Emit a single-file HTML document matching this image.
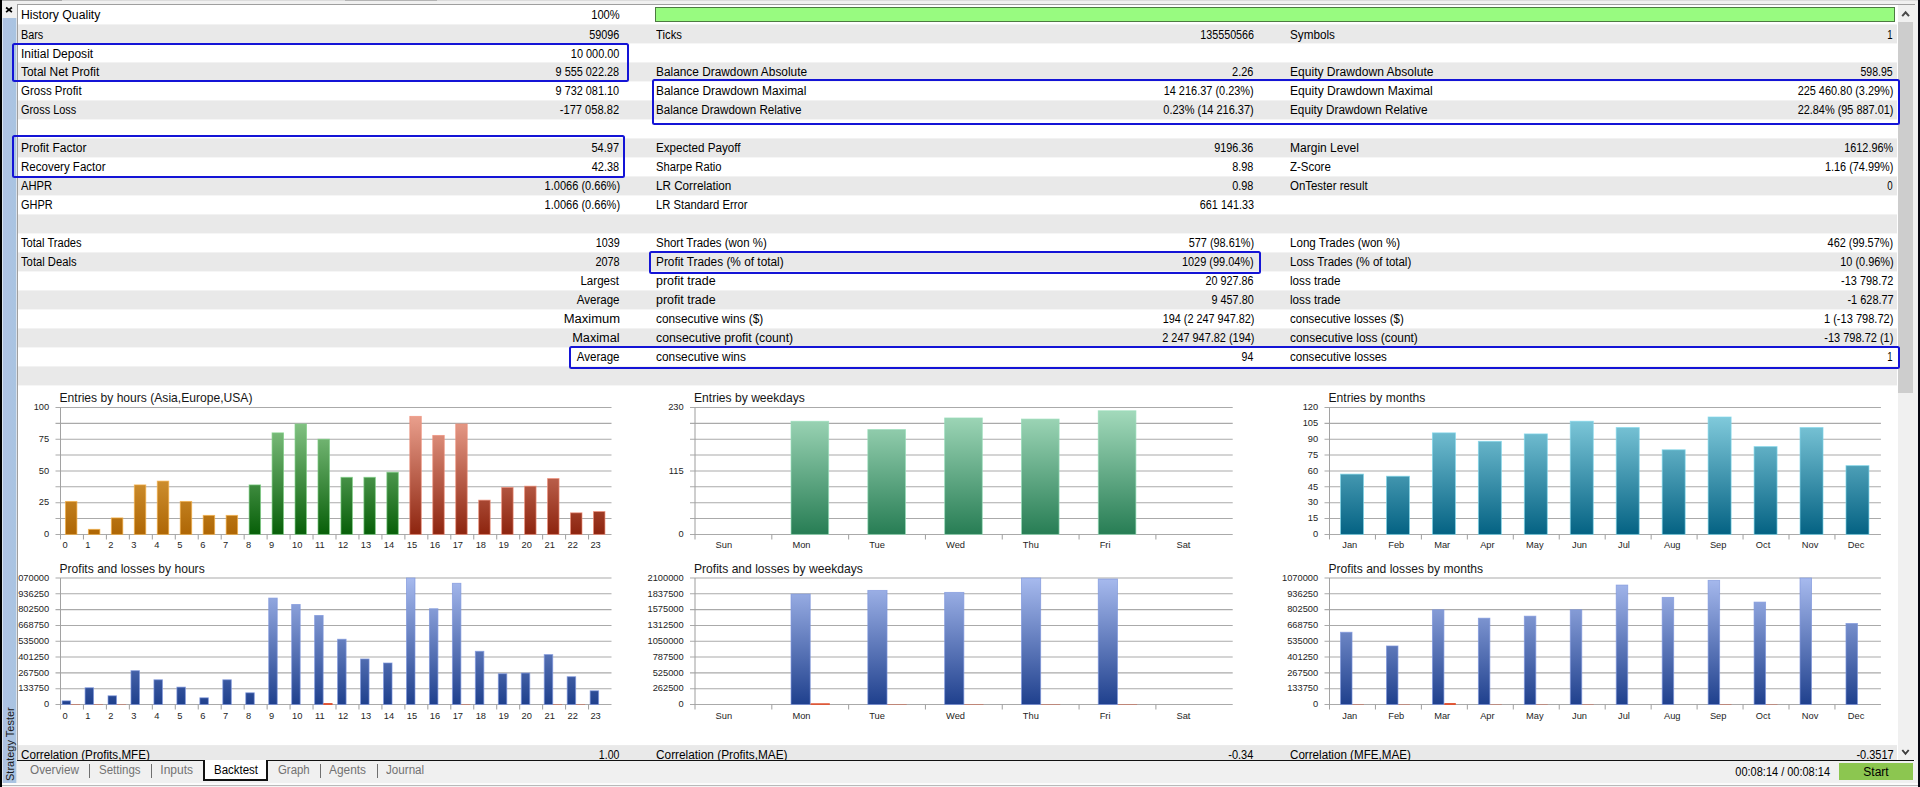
<!DOCTYPE html>
<html><head><meta charset="utf-8"><title>Strategy Tester</title>
<style>
html,body{margin:0;padding:0;background:#f0f0f0;}
body{width:1920px;height:787px;overflow:hidden;position:relative;font-family:"Liberation Sans",sans-serif;font-size:12px;color:#0c0c0c;}
.abs{position:absolute;}
.row{position:absolute;left:18px;width:1879px;height:19px;}
.g{background:#e9e9e9;}
.w{background:#ffffff;}
.l,.v{position:absolute;height:19px;line-height:19px;white-space:pre;font-size:12px;color:#000;}
.v{text-align:right;transform-origin:100% 50%;}
.l{transform-origin:0 50%;}
.box{position:absolute;border:2px solid #1414d6;box-sizing:border-box;border-radius:2.5px;}
.tab{position:absolute;top:761px;height:20px;line-height:19px;font-size:12px;color:#727272;white-space:pre;}
.sep{position:absolute;top:764px;width:1.4px;height:14px;background:#707070;}
svg text{font-family:"Liberation Sans",sans-serif;}
</style></head><body>

<div class="abs" style="left:0;top:0;width:1920px;height:787px;background:#f0f0f0"></div>
<div class="abs" style="left:2px;top:0;width:1916px;height:1px;background:#dcdcdc"></div>
<div class="abs" style="left:2px;top:0;width:60px;height:1px;background:#a9a9a9"></div>
<div class="abs" style="left:345px;top:0;width:92px;height:1px;background:#b4b4b4"></div>
<div class="abs" style="left:0;top:0;width:2px;height:787px;background:#000"></div>
<div class="abs" style="left:1918px;top:0;width:2px;height:787px;background:#05050f"></div>
<div class="abs" style="left:2px;top:18px;width:15px;height:765px;background:linear-gradient(90deg,#dbe5f1 0,#dbe5f1 1px,#aec2e3 1.4px,#a9c4e1 13.6px,#d9e1ec 14px,#d9e1ec 15px)"></div>
<svg class="abs" style="left:5px;top:6px" width="8" height="8" viewBox="0 0 8 8"><path d="M1.1 1.5 L6.9 6.1 M6.9 1.5 L1.1 6.1" stroke="#000" stroke-width="1.75" fill="none"/></svg>
<div class="abs" style="left:3px;top:781px;width:80px;height:15px;line-height:15px;font-size:11px;color:#1a1a1a;transform-origin:0 0;transform:rotate(-90deg);white-space:pre">Strategy Tester</div>
<div class="abs" style="left:17px;top:4px;width:1898px;height:757px;background:#fff;border-left:1px solid #9f9f9f;border-top:1px solid #9f9f9f;box-sizing:border-box"></div>
<svg class="abs" style="left:0;top:0" width="1920" height="762"><rect x="18" y="24.40" width="1879" height="19" fill="#e9e9e9"/><rect x="18" y="62.40" width="1879" height="19" fill="#e9e9e9"/><rect x="18" y="100.40" width="1879" height="19" fill="#e9e9e9"/><rect x="18" y="138.40" width="1879" height="19" fill="#e9e9e9"/><rect x="18" y="176.40" width="1879" height="19" fill="#e9e9e9"/><rect x="18" y="214.40" width="1879" height="19" fill="#e9e9e9"/><rect x="18" y="252.40" width="1879" height="19" fill="#e9e9e9"/><rect x="18" y="290.40" width="1879" height="19" fill="#e9e9e9"/><rect x="18" y="328.40" width="1879" height="19" fill="#e9e9e9"/><rect x="18" y="366.40" width="1879" height="19" fill="#e9e9e9"/><rect x="18" y="745.10" width="1879" height="19" fill="#e9e9e9"/></svg>
<div class="l" style="left:21.20px;top:6px;transform-origin:0 50%;transform:translateY(0px) scaleX(1.0169);">History Quality</div>
<div class="l" style="left:588.67px;top:6px;transform-origin:100% 50%;transform:translateY(0px) scaleX(0.9286);">100%</div>
<div class="l" style="left:21.20px;top:26px;transform-origin:0 50%;transform:translateY(0px) scaleX(0.9013);">Bars</div>
<div class="l" style="left:586.06px;top:26px;transform-origin:100% 50%;transform:translateY(0px) scaleX(0.9043);">59096</div>
<div class="l" style="left:656.20px;top:26px;transform-origin:0 50%;transform:translateY(0px) scaleX(0.9405);">Ticks</div>
<div class="l" style="left:1193.65px;top:26px;transform-origin:100% 50%;transform:translateY(0px) scaleX(0.8961);">135550566</div>
<div class="l" style="left:1289.90px;top:26px;transform-origin:0 50%;transform:translateY(0px) scaleX(0.9756);">Symbols</div>
<div class="l" style="left:1886.49px;top:26px;transform-origin:100% 50%;transform:translateY(0px) scaleX(0.8000);">1</div>
<div class="l" style="left:21.20px;top:45px;transform-origin:0 50%;transform:translateY(0px) scaleX(1.0014);">Initial Deposit</div>
<div class="l" style="left:566.06px;top:45px;transform-origin:100% 50%;transform:translateY(0px) scaleX(0.9096);">10 000.00</div>
<div class="l" style="left:21.20px;top:63px;transform-origin:0 50%;transform:translateY(0px) scaleX(0.9949);">Total Net Profit</div>
<div class="l" style="left:549.36px;top:63px;transform-origin:100% 50%;transform:translateY(0px) scaleX(0.9059);">9 555 022.28</div>
<div class="l" style="left:656.20px;top:63px;transform-origin:0 50%;transform:translateY(0px) scaleX(0.9888);">Balance Drawdown Absolute</div>
<div class="l" style="left:1230.36px;top:63px;transform-origin:100% 50%;transform:translateY(0px) scaleX(0.9103);">2.26</div>
<div class="l" style="left:1289.90px;top:63px;transform-origin:0 50%;transform:translateY(0px) scaleX(1.0050);">Equity Drawdown Absolute</div>
<div class="l" style="left:1856.44px;top:63px;transform-origin:100% 50%;transform:translateY(0px) scaleX(0.8768);">598.95</div>
<div class="l" style="left:21.20px;top:82px;transform-origin:0 50%;transform:translateY(0px) scaleX(0.9569);">Gross Profit</div>
<div class="l" style="left:549.36px;top:82px;transform-origin:100% 50%;transform:translateY(0px) scaleX(0.9059);">9 732 081.10</div>
<div class="l" style="left:656.20px;top:82px;transform-origin:0 50%;transform:translateY(0px) scaleX(0.9933);">Balance Drawdown Maximal</div>
<div class="l" style="left:1155.24px;top:82px;transform-origin:100% 50%;transform:translateY(0px) scaleX(0.9125);">14 216.37 (0.23%)</div>
<div class="l" style="left:1289.90px;top:82px;transform-origin:0 50%;transform:translateY(0px) scaleX(1.0100);">Equity Drawdown Maximal</div>
<div class="l" style="left:1787.94px;top:82px;transform-origin:100% 50%;transform:translateY(0px) scaleX(0.9087);">225 460.80 (3.29%)</div>
<div class="l" style="left:21.20px;top:101px;transform-origin:0 50%;transform:translateY(0px) scaleX(0.9095);">Gross Loss</div>
<div class="l" style="left:555.46px;top:101px;transform-origin:100% 50%;transform:translateY(0px) scaleX(0.9254);">-177 058.82</div>
<div class="l" style="left:656.20px;top:101px;transform-origin:0 50%;transform:translateY(0px) scaleX(0.9690);">Balance Drawdown Relative</div>
<div class="l" style="left:1155.24px;top:101px;transform-origin:100% 50%;transform:translateY(0px) scaleX(0.9159);">0.23% (14 216.37)</div>
<div class="l" style="left:1289.90px;top:101px;transform-origin:0 50%;transform:translateY(0px) scaleX(0.9812);">Equity Drawdown Relative</div>
<div class="l" style="left:1787.94px;top:101px;transform-origin:100% 50%;transform:translateY(0px) scaleX(0.9087);">22.84% (95 887.01)</div>
<div class="l" style="left:21.20px;top:139px;transform-origin:0 50%;transform:translateY(0px) scaleX(1.0016);">Profit Factor</div>
<div class="l" style="left:589.46px;top:139px;transform-origin:100% 50%;transform:translateY(0px) scaleX(0.9172);">54.97</div>
<div class="l" style="left:656.20px;top:139px;transform-origin:0 50%;transform:translateY(0px) scaleX(0.9698);">Expected Payoff</div>
<div class="l" style="left:1210.35px;top:139px;transform-origin:100% 50%;transform:translateY(0px) scaleX(0.9033);">9196.36</div>
<div class="l" style="left:1289.90px;top:139px;transform-origin:0 50%;transform:translateY(0px) scaleX(1.0015);">Margin Level</div>
<div class="l" style="left:1838.97px;top:139px;transform-origin:100% 50%;transform:translateY(0px) scaleX(0.9015);">1612.96%</div>
<div class="l" style="left:21.20px;top:158px;transform-origin:0 50%;transform:translateY(0px) scaleX(0.9597);">Recovery Factor</div>
<div class="l" style="left:589.36px;top:158px;transform-origin:100% 50%;transform:translateY(0px) scaleX(0.9078);">42.38</div>
<div class="l" style="left:656.20px;top:158px;transform-origin:0 50%;transform:translateY(0px) scaleX(0.9349);">Sharpe Ratio</div>
<div class="l" style="left:1230.36px;top:158px;transform-origin:100% 50%;transform:translateY(0px) scaleX(0.9063);">8.98</div>
<div class="l" style="left:1289.90px;top:158px;transform-origin:0 50%;transform:translateY(0px) scaleX(0.9569);">Z-Score</div>
<div class="l" style="left:1817.94px;top:158px;transform-origin:100% 50%;transform:translateY(0px) scaleX(0.9079);">1.16 (74.99%)</div>
<div class="l" style="left:21.20px;top:177px;transform-origin:0 50%;transform:translateY(0px) scaleX(0.9329);">AHPR</div>
<div class="l" style="left:537.55px;top:177px;transform-origin:100% 50%;transform:translateY(0px) scaleX(0.9193);">1.0066 (0.66%)</div>
<div class="l" style="left:656.20px;top:177px;transform-origin:0 50%;transform:translateY(0px) scaleX(0.9735);">LR Correlation</div>
<div class="l" style="left:1230.36px;top:177px;transform-origin:100% 50%;transform:translateY(0px) scaleX(0.9063);">0.98</div>
<div class="l" style="left:1289.90px;top:177px;transform-origin:0 50%;transform:translateY(0px) scaleX(0.9542);">OnTester result</div>
<div class="l" style="left:1886.41px;top:177px;transform-origin:100% 50%;transform:translateY(0px) scaleX(0.8070);">0</div>
<div class="l" style="left:21.20px;top:196px;transform-origin:0 50%;transform:translateY(0px) scaleX(0.9134);">GHPR</div>
<div class="l" style="left:537.55px;top:196px;transform-origin:100% 50%;transform:translateY(0px) scaleX(0.9193);">1.0066 (0.66%)</div>
<div class="l" style="left:656.20px;top:196px;transform-origin:0 50%;transform:translateY(0px) scaleX(0.9387);">LR Standard Error</div>
<div class="l" style="left:1193.66px;top:196px;transform-origin:100% 50%;transform:translateY(0px) scaleX(0.9034);">661 141.33</div>
<div class="l" style="left:21.20px;top:234px;transform-origin:0 50%;transform:translateY(0px) scaleX(0.9274);">Total Trades</div>
<div class="l" style="left:592.84px;top:234px;transform-origin:100% 50%;transform:translateY(0px) scaleX(0.8968);">1039</div>
<div class="l" style="left:656.20px;top:234px;transform-origin:0 50%;transform:translateY(0px) scaleX(0.9539);">Short Trades (won %)</div>
<div class="l" style="left:1181.84px;top:234px;transform-origin:100% 50%;transform:translateY(0px) scaleX(0.9069);">577 (98.61%)</div>
<div class="l" style="left:1289.90px;top:234px;transform-origin:0 50%;transform:translateY(0px) scaleX(0.9662);">Long Trades (won %)</div>
<div class="l" style="left:1821.24px;top:234px;transform-origin:100% 50%;transform:translateY(0px) scaleX(0.9086);">462 (99.57%)</div>
<div class="l" style="left:21.20px;top:253px;transform-origin:0 50%;transform:translateY(0px) scaleX(0.9370);">Total Deals</div>
<div class="l" style="left:592.76px;top:253px;transform-origin:100% 50%;transform:translateY(0px) scaleX(0.9102);">2078</div>
<div class="l" style="left:656.20px;top:253px;transform-origin:0 50%;transform:translateY(0px) scaleX(0.9867);">Profit Trades (% of total)</div>
<div class="l" style="left:1175.24px;top:253px;transform-origin:100% 50%;transform:translateY(0px) scaleX(0.9118);">1029 (99.04%)</div>
<div class="l" style="left:1289.90px;top:253px;transform-origin:0 50%;transform:translateY(0px) scaleX(0.9568);">Loss Trades (% of total)</div>
<div class="l" style="left:1834.64px;top:253px;transform-origin:100% 50%;transform:translateY(0px) scaleX(0.9107);">10 (0.96%)</div>
<div class="l" style="left:579.00px;top:272px;transform-origin:100% 50%;transform:translateY(0px) scaleX(0.9641);">Largest</div>
<div class="l" style="left:656.20px;top:272px;transform-origin:0 50%;transform:translateY(0px) scaleX(1.0392);">profit trade</div>
<div class="l" style="left:1200.35px;top:272px;transform-origin:100% 50%;transform:translateY(0px) scaleX(0.8987);">20 927.86</div>
<div class="l" style="left:1289.90px;top:272px;transform-origin:0 50%;transform:translateY(0px) scaleX(0.9705);">loss trade</div>
<div class="l" style="left:1835.85px;top:272px;transform-origin:100% 50%;transform:translateY(0px) scaleX(0.9112);">-13 798.72</div>
<div class="l" style="left:574.98px;top:291px;transform-origin:100% 50%;transform:translateY(0px) scaleX(0.9614);">Average</div>
<div class="l" style="left:656.20px;top:291px;transform-origin:0 50%;transform:translateY(0px) scaleX(1.0392);">profit trade</div>
<div class="l" style="left:1207.05px;top:291px;transform-origin:100% 50%;transform:translateY(0px) scaleX(0.9037);">9 457.80</div>
<div class="l" style="left:1289.90px;top:291px;transform-origin:0 50%;transform:translateY(0px) scaleX(0.9705);">loss trade</div>
<div class="l" style="left:1842.55px;top:291px;transform-origin:100% 50%;transform:translateY(0px) scaleX(0.9133);">-1 628.77</div>
<div class="l" style="left:567.87px;top:310px;transform-origin:100% 50%;transform:translateY(0px) scaleX(1.0817);">Maximum</div>
<div class="l" style="left:656.20px;top:310px;transform-origin:0 50%;transform:translateY(0px) scaleX(0.9860);">consecutive wins ($)</div>
<div class="l" style="left:1152.53px;top:310px;transform-origin:100% 50%;transform:translateY(0px) scaleX(0.9048);">194 (2 247 947.82)</div>
<div class="l" style="left:1289.90px;top:310px;transform-origin:0 50%;transform:translateY(0px) scaleX(0.9583);">consecutive losses ($)</div>
<div class="l" style="left:1817.95px;top:310px;transform-origin:100% 50%;transform:translateY(0px) scaleX(0.9214);">1 (-13 798.72)</div>
<div class="l" style="left:575.15px;top:329px;transform-origin:100% 50%;transform:translateY(0px) scaleX(1.0629);">Maximal</div>
<div class="l" style="left:656.20px;top:329px;transform-origin:0 50%;transform:translateY(0px) scaleX(1.0233);">consecutive profit (count)</div>
<div class="l" style="left:1152.54px;top:329px;transform-origin:100% 50%;transform:translateY(0px) scaleX(0.9091);">2 247 947.82 (194)</div>
<div class="l" style="left:1289.90px;top:329px;transform-origin:0 50%;transform:translateY(0px) scaleX(0.9929);">consecutive loss (count)</div>
<div class="l" style="left:1817.94px;top:329px;transform-origin:100% 50%;transform:translateY(0px) scaleX(0.9164);">-13 798.72 (1)</div>
<div class="l" style="left:574.98px;top:348px;transform-origin:100% 50%;transform:translateY(0px) scaleX(0.9614);">Average</div>
<div class="l" style="left:656.20px;top:348px;transform-origin:0 50%;transform:translateY(0px) scaleX(0.9911);">consecutive wins</div>
<div class="l" style="left:1240.26px;top:348px;transform-origin:100% 50%;transform:translateY(0px) scaleX(0.8800);">94</div>
<div class="l" style="left:1289.90px;top:348px;transform-origin:0 50%;transform:translateY(0px) scaleX(0.9619);">consecutive losses</div>
<div class="l" style="left:1886.49px;top:348px;transform-origin:100% 50%;transform:translateY(0px) scaleX(0.8000);">1</div>
<div class="l" style="left:21.20px;top:746px;transform-origin:0 50%;transform:translateY(0px) scaleX(0.9711);">Correlation (Profits,MFE)</div>
<div class="l" style="left:596.04px;top:746px;transform-origin:100% 50%;transform:translateY(0px) scaleX(0.8773);">1.00</div>
<div class="l" style="left:656.20px;top:746px;transform-origin:0 50%;transform:translateY(0px) scaleX(0.9864);">Correlation (Profits,MAE)</div>
<div class="l" style="left:1226.27px;top:746px;transform-origin:100% 50%;transform:translateY(0px) scaleX(0.9170);">-0.34</div>
<div class="l" style="left:1289.90px;top:746px;transform-origin:0 50%;transform:translateY(0px) scaleX(0.9692);">Correlation (MFE,MAE)</div>
<div class="l" style="left:1852.55px;top:746px;transform-origin:100% 50%;transform:translateY(0px) scaleX(0.9167);">-0.3517</div>
<div class="abs" style="left:655px;top:7px;width:1240px;height:15px;box-sizing:border-box;background:#98fb80;border:1px solid #4d7a42"></div>
<svg class="abs" style="left:18px;top:385px" width="1879" height="361" viewBox="18 385 1879 361">
<defs>
<linearGradient id="or0" gradientUnits="userSpaceOnUse" x1="0" y1="407.5" x2="0" y2="534.4"><stop offset="0" stop-color="#f6c468"/><stop offset="1" stop-color="#ae6604"/></linearGradient>
<linearGradient id="gr0" gradientUnits="userSpaceOnUse" x1="0" y1="407.5" x2="0" y2="534.4"><stop offset="0" stop-color="#93cf93"/><stop offset="1" stop-color="#075f08"/></linearGradient>
<linearGradient id="rd0" gradientUnits="userSpaceOnUse" x1="0" y1="407.5" x2="0" y2="534.4"><stop offset="0" stop-color="#f0a896"/><stop offset="1" stop-color="#8d240e"/></linearGradient>
<linearGradient id="wk0" gradientUnits="userSpaceOnUse" x1="0" y1="407.5" x2="0" y2="534.4"><stop offset="0" stop-color="#a6dcbe"/><stop offset="1" stop-color="#277d54"/></linearGradient>
<linearGradient id="mo0" gradientUnits="userSpaceOnUse" x1="0" y1="407.5" x2="0" y2="534.4"><stop offset="0" stop-color="#8ad2e2"/><stop offset="1" stop-color="#046283"/></linearGradient>
<linearGradient id="bl0" gradientUnits="userSpaceOnUse" x1="0" y1="407.5" x2="0" y2="534.4"><stop offset="0" stop-color="#a7baee"/><stop offset="1" stop-color="#1f408d"/></linearGradient>
<linearGradient id="or1" gradientUnits="userSpaceOnUse" x1="0" y1="578.0" x2="0" y2="704.5"><stop offset="0" stop-color="#f6c468"/><stop offset="1" stop-color="#ae6604"/></linearGradient>
<linearGradient id="gr1" gradientUnits="userSpaceOnUse" x1="0" y1="578.0" x2="0" y2="704.5"><stop offset="0" stop-color="#93cf93"/><stop offset="1" stop-color="#075f08"/></linearGradient>
<linearGradient id="rd1" gradientUnits="userSpaceOnUse" x1="0" y1="578.0" x2="0" y2="704.5"><stop offset="0" stop-color="#f0a896"/><stop offset="1" stop-color="#8d240e"/></linearGradient>
<linearGradient id="wk1" gradientUnits="userSpaceOnUse" x1="0" y1="578.0" x2="0" y2="704.5"><stop offset="0" stop-color="#a6dcbe"/><stop offset="1" stop-color="#277d54"/></linearGradient>
<linearGradient id="mo1" gradientUnits="userSpaceOnUse" x1="0" y1="578.0" x2="0" y2="704.5"><stop offset="0" stop-color="#8ad2e2"/><stop offset="1" stop-color="#046283"/></linearGradient>
<linearGradient id="bl1" gradientUnits="userSpaceOnUse" x1="0" y1="578.0" x2="0" y2="704.5"><stop offset="0" stop-color="#a7baee"/><stop offset="1" stop-color="#1f408d"/></linearGradient>
</defs>
<line x1="55.5" y1="407.5" x2="611.5" y2="407.5" stroke="#aaaaaa" stroke-width="1.05"/>
<line x1="55.5" y1="423.36" x2="611.5" y2="423.36" stroke="#aaaaaa" stroke-width="1.05"/>
<line x1="55.5" y1="439.23" x2="611.5" y2="439.23" stroke="#aaaaaa" stroke-width="1.05"/>
<line x1="55.5" y1="455.09" x2="611.5" y2="455.09" stroke="#aaaaaa" stroke-width="1.05"/>
<line x1="55.5" y1="470.95" x2="611.5" y2="470.95" stroke="#aaaaaa" stroke-width="1.05"/>
<line x1="55.5" y1="486.81" x2="611.5" y2="486.81" stroke="#aaaaaa" stroke-width="1.05"/>
<line x1="55.5" y1="502.67" x2="611.5" y2="502.67" stroke="#aaaaaa" stroke-width="1.05"/>
<line x1="55.5" y1="518.54" x2="611.5" y2="518.54" stroke="#aaaaaa" stroke-width="1.05"/>
<line x1="55.5" y1="534.4" x2="611.5" y2="534.4" stroke="#aaaaaa" stroke-width="1.05"/>
<line x1="60.5" y1="407.5" x2="60.5" y2="539.4" stroke="#a2a2a2" stroke-width="1.05"/>
<line x1="83.46" y1="534.4" x2="83.46" y2="539.4" stroke="#a2a2a2" stroke-width="1.05"/>
<line x1="106.42" y1="534.4" x2="106.42" y2="539.4" stroke="#a2a2a2" stroke-width="1.05"/>
<line x1="129.38" y1="534.4" x2="129.38" y2="539.4" stroke="#a2a2a2" stroke-width="1.05"/>
<line x1="152.33" y1="534.4" x2="152.33" y2="539.4" stroke="#a2a2a2" stroke-width="1.05"/>
<line x1="175.29" y1="534.4" x2="175.29" y2="539.4" stroke="#a2a2a2" stroke-width="1.05"/>
<line x1="198.25" y1="534.4" x2="198.25" y2="539.4" stroke="#a2a2a2" stroke-width="1.05"/>
<line x1="221.21" y1="534.4" x2="221.21" y2="539.4" stroke="#a2a2a2" stroke-width="1.05"/>
<line x1="244.17" y1="534.4" x2="244.17" y2="539.4" stroke="#a2a2a2" stroke-width="1.05"/>
<line x1="267.12" y1="534.4" x2="267.12" y2="539.4" stroke="#a2a2a2" stroke-width="1.05"/>
<line x1="290.08" y1="534.4" x2="290.08" y2="539.4" stroke="#a2a2a2" stroke-width="1.05"/>
<line x1="313.04" y1="534.4" x2="313.04" y2="539.4" stroke="#a2a2a2" stroke-width="1.05"/>
<line x1="336" y1="534.4" x2="336" y2="539.4" stroke="#a2a2a2" stroke-width="1.05"/>
<line x1="358.96" y1="534.4" x2="358.96" y2="539.4" stroke="#a2a2a2" stroke-width="1.05"/>
<line x1="381.92" y1="534.4" x2="381.92" y2="539.4" stroke="#a2a2a2" stroke-width="1.05"/>
<line x1="404.88" y1="534.4" x2="404.88" y2="539.4" stroke="#a2a2a2" stroke-width="1.05"/>
<line x1="427.83" y1="534.4" x2="427.83" y2="539.4" stroke="#a2a2a2" stroke-width="1.05"/>
<line x1="450.79" y1="534.4" x2="450.79" y2="539.4" stroke="#a2a2a2" stroke-width="1.05"/>
<line x1="473.75" y1="534.4" x2="473.75" y2="539.4" stroke="#a2a2a2" stroke-width="1.05"/>
<line x1="496.71" y1="534.4" x2="496.71" y2="539.4" stroke="#a2a2a2" stroke-width="1.05"/>
<line x1="519.67" y1="534.4" x2="519.67" y2="539.4" stroke="#a2a2a2" stroke-width="1.05"/>
<line x1="542.62" y1="534.4" x2="542.62" y2="539.4" stroke="#a2a2a2" stroke-width="1.05"/>
<line x1="565.58" y1="534.4" x2="565.58" y2="539.4" stroke="#a2a2a2" stroke-width="1.05"/>
<line x1="588.54" y1="534.4" x2="588.54" y2="539.4" stroke="#a2a2a2" stroke-width="1.05"/>
<text x="59.5" y="401.7" font-size="12.1" fill="#161616">Entries by hours (Asia,Europe,USA)</text>
<text x="49.2" y="410.3" font-size="9.3" text-anchor="end" fill="#1e1e1e">100</text>
<text x="49.2" y="442.03" font-size="9.3" text-anchor="end" fill="#1e1e1e">75</text>
<text x="49.2" y="473.75" font-size="9.3" text-anchor="end" fill="#1e1e1e">50</text>
<text x="49.2" y="505.47" font-size="9.3" text-anchor="end" fill="#1e1e1e">25</text>
<text x="49.2" y="537.2" font-size="9.3" text-anchor="end" fill="#1e1e1e">0</text>
<text x="62.4" y="548.2" font-size="9.3" fill="#1e1e1e">0</text>
<text x="85.36" y="548.2" font-size="9.3" fill="#1e1e1e">1</text>
<text x="108.32" y="548.2" font-size="9.3" fill="#1e1e1e">2</text>
<text x="131.28" y="548.2" font-size="9.3" fill="#1e1e1e">3</text>
<text x="154.23" y="548.2" font-size="9.3" fill="#1e1e1e">4</text>
<text x="177.19" y="548.2" font-size="9.3" fill="#1e1e1e">5</text>
<text x="200.15" y="548.2" font-size="9.3" fill="#1e1e1e">6</text>
<text x="223.11" y="548.2" font-size="9.3" fill="#1e1e1e">7</text>
<text x="246.07" y="548.2" font-size="9.3" fill="#1e1e1e">8</text>
<text x="269.02" y="548.2" font-size="9.3" fill="#1e1e1e">9</text>
<text x="291.98" y="548.2" font-size="9.3" fill="#1e1e1e">10</text>
<text x="314.94" y="548.2" font-size="9.3" fill="#1e1e1e">11</text>
<text x="337.9" y="548.2" font-size="9.3" fill="#1e1e1e">12</text>
<text x="360.86" y="548.2" font-size="9.3" fill="#1e1e1e">13</text>
<text x="383.82" y="548.2" font-size="9.3" fill="#1e1e1e">14</text>
<text x="406.77" y="548.2" font-size="9.3" fill="#1e1e1e">15</text>
<text x="429.73" y="548.2" font-size="9.3" fill="#1e1e1e">16</text>
<text x="452.69" y="548.2" font-size="9.3" fill="#1e1e1e">17</text>
<text x="475.65" y="548.2" font-size="9.3" fill="#1e1e1e">18</text>
<text x="498.61" y="548.2" font-size="9.3" fill="#1e1e1e">19</text>
<text x="521.57" y="548.2" font-size="9.3" fill="#1e1e1e">20</text>
<text x="544.52" y="548.2" font-size="9.3" fill="#1e1e1e">21</text>
<text x="567.48" y="548.2" font-size="9.3" fill="#1e1e1e">22</text>
<text x="590.44" y="548.2" font-size="9.3" fill="#1e1e1e">23</text>
<rect x="65.44" y="501.41" width="11.48" height="32.99" fill="url(#or0)" stroke="#f4b048" stroke-width="0.9" stroke-opacity="0.75"/>
<rect x="88.39" y="529.32" width="11.48" height="5.08" fill="url(#or0)" stroke="#f4b048" stroke-width="0.9" stroke-opacity="0.75"/>
<rect x="111.35" y="517.9" width="11.48" height="16.5" fill="url(#or0)" stroke="#f4b048" stroke-width="0.9" stroke-opacity="0.75"/>
<rect x="134.31" y="484.91" width="11.48" height="49.49" fill="url(#or0)" stroke="#f4b048" stroke-width="0.9" stroke-opacity="0.75"/>
<rect x="157.27" y="481.1" width="11.48" height="53.3" fill="url(#or0)" stroke="#f4b048" stroke-width="0.9" stroke-opacity="0.75"/>
<rect x="180.23" y="501.41" width="11.48" height="32.99" fill="url(#or0)" stroke="#f4b048" stroke-width="0.9" stroke-opacity="0.75"/>
<rect x="203.19" y="515.37" width="11.48" height="19.03" fill="url(#or0)" stroke="#f4b048" stroke-width="0.9" stroke-opacity="0.75"/>
<rect x="226.14" y="515.37" width="11.48" height="19.03" fill="url(#or0)" stroke="#f4b048" stroke-width="0.9" stroke-opacity="0.75"/>
<rect x="249.1" y="484.91" width="11.48" height="49.49" fill="url(#gr0)" stroke="#7fcf86" stroke-width="0.9" stroke-opacity="0.75"/>
<rect x="272.06" y="432.88" width="11.48" height="101.52" fill="url(#gr0)" stroke="#7fcf86" stroke-width="0.9" stroke-opacity="0.75"/>
<rect x="295.02" y="424" width="11.48" height="110.4" fill="url(#gr0)" stroke="#7fcf86" stroke-width="0.9" stroke-opacity="0.75"/>
<rect x="317.98" y="439.23" width="11.48" height="95.17" fill="url(#gr0)" stroke="#7fcf86" stroke-width="0.9" stroke-opacity="0.75"/>
<rect x="340.94" y="477.29" width="11.48" height="57.11" fill="url(#gr0)" stroke="#7fcf86" stroke-width="0.9" stroke-opacity="0.75"/>
<rect x="363.89" y="477.29" width="11.48" height="57.11" fill="url(#gr0)" stroke="#7fcf86" stroke-width="0.9" stroke-opacity="0.75"/>
<rect x="386.85" y="472.22" width="11.48" height="62.18" fill="url(#gr0)" stroke="#7fcf86" stroke-width="0.9" stroke-opacity="0.75"/>
<rect x="409.81" y="416.38" width="11.48" height="118.02" fill="url(#rd0)" stroke="#ee8d78" stroke-width="0.9" stroke-opacity="0.75"/>
<rect x="432.77" y="435.42" width="11.48" height="98.98" fill="url(#rd0)" stroke="#ee8d78" stroke-width="0.9" stroke-opacity="0.75"/>
<rect x="455.73" y="424" width="11.48" height="110.4" fill="url(#rd0)" stroke="#ee8d78" stroke-width="0.9" stroke-opacity="0.75"/>
<rect x="478.69" y="500.14" width="11.48" height="34.26" fill="url(#rd0)" stroke="#ee8d78" stroke-width="0.9" stroke-opacity="0.75"/>
<rect x="501.64" y="487.45" width="11.48" height="46.95" fill="url(#rd0)" stroke="#ee8d78" stroke-width="0.9" stroke-opacity="0.75"/>
<rect x="524.6" y="486.18" width="11.48" height="48.22" fill="url(#rd0)" stroke="#ee8d78" stroke-width="0.9" stroke-opacity="0.75"/>
<rect x="547.56" y="478.56" width="11.48" height="55.84" fill="url(#rd0)" stroke="#ee8d78" stroke-width="0.9" stroke-opacity="0.75"/>
<rect x="570.52" y="512.83" width="11.48" height="21.57" fill="url(#rd0)" stroke="#ee8d78" stroke-width="0.9" stroke-opacity="0.75"/>
<rect x="593.48" y="511.56" width="11.48" height="22.84" fill="url(#rd0)" stroke="#ee8d78" stroke-width="0.9" stroke-opacity="0.75"/>
<line x1="690" y1="407.5" x2="1232.7" y2="407.5" stroke="#aaaaaa" stroke-width="1.05"/>
<line x1="690" y1="423.36" x2="1232.7" y2="423.36" stroke="#aaaaaa" stroke-width="1.05"/>
<line x1="690" y1="439.23" x2="1232.7" y2="439.23" stroke="#aaaaaa" stroke-width="1.05"/>
<line x1="690" y1="455.09" x2="1232.7" y2="455.09" stroke="#aaaaaa" stroke-width="1.05"/>
<line x1="690" y1="470.95" x2="1232.7" y2="470.95" stroke="#aaaaaa" stroke-width="1.05"/>
<line x1="690" y1="486.81" x2="1232.7" y2="486.81" stroke="#aaaaaa" stroke-width="1.05"/>
<line x1="690" y1="502.67" x2="1232.7" y2="502.67" stroke="#aaaaaa" stroke-width="1.05"/>
<line x1="690" y1="518.54" x2="1232.7" y2="518.54" stroke="#aaaaaa" stroke-width="1.05"/>
<line x1="690" y1="534.4" x2="1232.7" y2="534.4" stroke="#aaaaaa" stroke-width="1.05"/>
<line x1="695" y1="407.5" x2="695" y2="539.4" stroke="#a2a2a2" stroke-width="1.05"/>
<line x1="771.81" y1="534.4" x2="771.81" y2="539.4" stroke="#a2a2a2" stroke-width="1.05"/>
<line x1="848.63" y1="534.4" x2="848.63" y2="539.4" stroke="#a2a2a2" stroke-width="1.05"/>
<line x1="925.44" y1="534.4" x2="925.44" y2="539.4" stroke="#a2a2a2" stroke-width="1.05"/>
<line x1="1002.26" y1="534.4" x2="1002.26" y2="539.4" stroke="#a2a2a2" stroke-width="1.05"/>
<line x1="1079.07" y1="534.4" x2="1079.07" y2="539.4" stroke="#a2a2a2" stroke-width="1.05"/>
<line x1="1155.89" y1="534.4" x2="1155.89" y2="539.4" stroke="#a2a2a2" stroke-width="1.05"/>
<text x="694" y="401.7" font-size="12.1" fill="#161616">Entries by weekdays</text>
<text x="683.7" y="410.3" font-size="9.3" text-anchor="end" fill="#1e1e1e">230</text>
<text x="683.7" y="473.75" font-size="9.3" text-anchor="end" fill="#1e1e1e">115</text>
<text x="683.7" y="537.2" font-size="9.3" text-anchor="end" fill="#1e1e1e">0</text>
<text x="715.6" y="548.2" font-size="9.3" fill="#1e1e1e">Sun</text>
<text x="792.41" y="548.2" font-size="9.3" fill="#1e1e1e">Mon</text>
<text x="869.23" y="548.2" font-size="9.3" fill="#1e1e1e">Tue</text>
<text x="946.04" y="548.2" font-size="9.3" fill="#1e1e1e">Wed</text>
<text x="1022.86" y="548.2" font-size="9.3" fill="#1e1e1e">Thu</text>
<text x="1099.67" y="548.2" font-size="9.3" fill="#1e1e1e">Fri</text>
<text x="1176.49" y="548.2" font-size="9.3" fill="#1e1e1e">Sat</text>
<rect x="791.02" y="421.29" width="37.64" height="113.11" fill="url(#wk0)" stroke="#97dcb8" stroke-width="0.9" stroke-opacity="0.75"/>
<rect x="867.83" y="429.57" width="37.64" height="104.83" fill="url(#wk0)" stroke="#97dcb8" stroke-width="0.9" stroke-opacity="0.75"/>
<rect x="944.65" y="417.98" width="37.64" height="116.42" fill="url(#wk0)" stroke="#97dcb8" stroke-width="0.9" stroke-opacity="0.75"/>
<rect x="1021.46" y="419.09" width="37.64" height="115.31" fill="url(#wk0)" stroke="#97dcb8" stroke-width="0.9" stroke-opacity="0.75"/>
<rect x="1098.27" y="410.81" width="37.64" height="123.59" fill="url(#wk0)" stroke="#97dcb8" stroke-width="0.9" stroke-opacity="0.75"/>
<line x1="1324.5" y1="407.5" x2="1880.9" y2="407.5" stroke="#aaaaaa" stroke-width="1.05"/>
<line x1="1324.5" y1="423.36" x2="1880.9" y2="423.36" stroke="#aaaaaa" stroke-width="1.05"/>
<line x1="1324.5" y1="439.23" x2="1880.9" y2="439.23" stroke="#aaaaaa" stroke-width="1.05"/>
<line x1="1324.5" y1="455.09" x2="1880.9" y2="455.09" stroke="#aaaaaa" stroke-width="1.05"/>
<line x1="1324.5" y1="470.95" x2="1880.9" y2="470.95" stroke="#aaaaaa" stroke-width="1.05"/>
<line x1="1324.5" y1="486.81" x2="1880.9" y2="486.81" stroke="#aaaaaa" stroke-width="1.05"/>
<line x1="1324.5" y1="502.67" x2="1880.9" y2="502.67" stroke="#aaaaaa" stroke-width="1.05"/>
<line x1="1324.5" y1="518.54" x2="1880.9" y2="518.54" stroke="#aaaaaa" stroke-width="1.05"/>
<line x1="1324.5" y1="534.4" x2="1880.9" y2="534.4" stroke="#aaaaaa" stroke-width="1.05"/>
<line x1="1329.5" y1="407.5" x2="1329.5" y2="539.4" stroke="#a2a2a2" stroke-width="1.05"/>
<line x1="1375.45" y1="534.4" x2="1375.45" y2="539.4" stroke="#a2a2a2" stroke-width="1.05"/>
<line x1="1421.4" y1="534.4" x2="1421.4" y2="539.4" stroke="#a2a2a2" stroke-width="1.05"/>
<line x1="1467.35" y1="534.4" x2="1467.35" y2="539.4" stroke="#a2a2a2" stroke-width="1.05"/>
<line x1="1513.3" y1="534.4" x2="1513.3" y2="539.4" stroke="#a2a2a2" stroke-width="1.05"/>
<line x1="1559.25" y1="534.4" x2="1559.25" y2="539.4" stroke="#a2a2a2" stroke-width="1.05"/>
<line x1="1605.2" y1="534.4" x2="1605.2" y2="539.4" stroke="#a2a2a2" stroke-width="1.05"/>
<line x1="1651.15" y1="534.4" x2="1651.15" y2="539.4" stroke="#a2a2a2" stroke-width="1.05"/>
<line x1="1697.1" y1="534.4" x2="1697.1" y2="539.4" stroke="#a2a2a2" stroke-width="1.05"/>
<line x1="1743.05" y1="534.4" x2="1743.05" y2="539.4" stroke="#a2a2a2" stroke-width="1.05"/>
<line x1="1789" y1="534.4" x2="1789" y2="539.4" stroke="#a2a2a2" stroke-width="1.05"/>
<line x1="1834.95" y1="534.4" x2="1834.95" y2="539.4" stroke="#a2a2a2" stroke-width="1.05"/>
<text x="1328.5" y="401.7" font-size="12.1" fill="#161616">Entries by months</text>
<text x="1318.2" y="410.3" font-size="9.3" text-anchor="end" fill="#1e1e1e">120</text>
<text x="1318.2" y="426.16" font-size="9.3" text-anchor="end" fill="#1e1e1e">105</text>
<text x="1318.2" y="442.03" font-size="9.3" text-anchor="end" fill="#1e1e1e">90</text>
<text x="1318.2" y="457.89" font-size="9.3" text-anchor="end" fill="#1e1e1e">75</text>
<text x="1318.2" y="473.75" font-size="9.3" text-anchor="end" fill="#1e1e1e">60</text>
<text x="1318.2" y="489.61" font-size="9.3" text-anchor="end" fill="#1e1e1e">45</text>
<text x="1318.2" y="505.47" font-size="9.3" text-anchor="end" fill="#1e1e1e">30</text>
<text x="1318.2" y="521.34" font-size="9.3" text-anchor="end" fill="#1e1e1e">15</text>
<text x="1318.2" y="537.2" font-size="9.3" text-anchor="end" fill="#1e1e1e">0</text>
<text x="1342.3" y="548.2" font-size="9.3" fill="#1e1e1e">Jan</text>
<text x="1388.25" y="548.2" font-size="9.3" fill="#1e1e1e">Feb</text>
<text x="1434.2" y="548.2" font-size="9.3" fill="#1e1e1e">Mar</text>
<text x="1480.15" y="548.2" font-size="9.3" fill="#1e1e1e">Apr</text>
<text x="1526.1" y="548.2" font-size="9.3" fill="#1e1e1e">May</text>
<text x="1572.05" y="548.2" font-size="9.3" fill="#1e1e1e">Jun</text>
<text x="1618" y="548.2" font-size="9.3" fill="#1e1e1e">Jul</text>
<text x="1663.95" y="548.2" font-size="9.3" fill="#1e1e1e">Aug</text>
<text x="1709.9" y="548.2" font-size="9.3" fill="#1e1e1e">Sep</text>
<text x="1755.85" y="548.2" font-size="9.3" fill="#1e1e1e">Oct</text>
<text x="1801.8" y="548.2" font-size="9.3" fill="#1e1e1e">Nov</text>
<text x="1847.75" y="548.2" font-size="9.3" fill="#1e1e1e">Dec</text>
<rect x="1340.53" y="474.12" width="22.98" height="60.28" fill="url(#mo0)" stroke="#7fd6ea" stroke-width="0.9" stroke-opacity="0.75"/>
<rect x="1386.48" y="476.24" width="22.98" height="58.16" fill="url(#mo0)" stroke="#7fd6ea" stroke-width="0.9" stroke-opacity="0.75"/>
<rect x="1432.43" y="432.88" width="22.98" height="101.52" fill="url(#mo0)" stroke="#7fd6ea" stroke-width="0.9" stroke-opacity="0.75"/>
<rect x="1478.38" y="441.34" width="22.98" height="93.06" fill="url(#mo0)" stroke="#7fd6ea" stroke-width="0.9" stroke-opacity="0.75"/>
<rect x="1524.33" y="433.94" width="22.98" height="100.46" fill="url(#mo0)" stroke="#7fd6ea" stroke-width="0.9" stroke-opacity="0.75"/>
<rect x="1570.28" y="421.25" width="22.98" height="113.15" fill="url(#mo0)" stroke="#7fd6ea" stroke-width="0.9" stroke-opacity="0.75"/>
<rect x="1616.23" y="427.59" width="22.98" height="106.81" fill="url(#mo0)" stroke="#7fd6ea" stroke-width="0.9" stroke-opacity="0.75"/>
<rect x="1662.18" y="449.8" width="22.98" height="84.6" fill="url(#mo0)" stroke="#7fd6ea" stroke-width="0.9" stroke-opacity="0.75"/>
<rect x="1708.13" y="417.02" width="22.98" height="117.38" fill="url(#mo0)" stroke="#7fd6ea" stroke-width="0.9" stroke-opacity="0.75"/>
<rect x="1754.08" y="446.63" width="22.98" height="87.77" fill="url(#mo0)" stroke="#7fd6ea" stroke-width="0.9" stroke-opacity="0.75"/>
<rect x="1800.03" y="427.59" width="22.98" height="106.81" fill="url(#mo0)" stroke="#7fd6ea" stroke-width="0.9" stroke-opacity="0.75"/>
<rect x="1845.98" y="465.66" width="22.98" height="68.74" fill="url(#mo0)" stroke="#7fd6ea" stroke-width="0.9" stroke-opacity="0.75"/>
<line x1="55.5" y1="578" x2="611.5" y2="578" stroke="#aaaaaa" stroke-width="1.05"/>
<line x1="55.5" y1="593.81" x2="611.5" y2="593.81" stroke="#aaaaaa" stroke-width="1.05"/>
<line x1="55.5" y1="609.62" x2="611.5" y2="609.62" stroke="#aaaaaa" stroke-width="1.05"/>
<line x1="55.5" y1="625.44" x2="611.5" y2="625.44" stroke="#aaaaaa" stroke-width="1.05"/>
<line x1="55.5" y1="641.25" x2="611.5" y2="641.25" stroke="#aaaaaa" stroke-width="1.05"/>
<line x1="55.5" y1="657.06" x2="611.5" y2="657.06" stroke="#aaaaaa" stroke-width="1.05"/>
<line x1="55.5" y1="672.88" x2="611.5" y2="672.88" stroke="#aaaaaa" stroke-width="1.05"/>
<line x1="55.5" y1="688.69" x2="611.5" y2="688.69" stroke="#aaaaaa" stroke-width="1.05"/>
<line x1="55.5" y1="704.5" x2="611.5" y2="704.5" stroke="#aaaaaa" stroke-width="1.05"/>
<line x1="60.5" y1="578" x2="60.5" y2="709.5" stroke="#a2a2a2" stroke-width="1.05"/>
<line x1="83.46" y1="704.5" x2="83.46" y2="709.5" stroke="#a2a2a2" stroke-width="1.05"/>
<line x1="106.42" y1="704.5" x2="106.42" y2="709.5" stroke="#a2a2a2" stroke-width="1.05"/>
<line x1="129.38" y1="704.5" x2="129.38" y2="709.5" stroke="#a2a2a2" stroke-width="1.05"/>
<line x1="152.33" y1="704.5" x2="152.33" y2="709.5" stroke="#a2a2a2" stroke-width="1.05"/>
<line x1="175.29" y1="704.5" x2="175.29" y2="709.5" stroke="#a2a2a2" stroke-width="1.05"/>
<line x1="198.25" y1="704.5" x2="198.25" y2="709.5" stroke="#a2a2a2" stroke-width="1.05"/>
<line x1="221.21" y1="704.5" x2="221.21" y2="709.5" stroke="#a2a2a2" stroke-width="1.05"/>
<line x1="244.17" y1="704.5" x2="244.17" y2="709.5" stroke="#a2a2a2" stroke-width="1.05"/>
<line x1="267.12" y1="704.5" x2="267.12" y2="709.5" stroke="#a2a2a2" stroke-width="1.05"/>
<line x1="290.08" y1="704.5" x2="290.08" y2="709.5" stroke="#a2a2a2" stroke-width="1.05"/>
<line x1="313.04" y1="704.5" x2="313.04" y2="709.5" stroke="#a2a2a2" stroke-width="1.05"/>
<line x1="336" y1="704.5" x2="336" y2="709.5" stroke="#a2a2a2" stroke-width="1.05"/>
<line x1="358.96" y1="704.5" x2="358.96" y2="709.5" stroke="#a2a2a2" stroke-width="1.05"/>
<line x1="381.92" y1="704.5" x2="381.92" y2="709.5" stroke="#a2a2a2" stroke-width="1.05"/>
<line x1="404.88" y1="704.5" x2="404.88" y2="709.5" stroke="#a2a2a2" stroke-width="1.05"/>
<line x1="427.83" y1="704.5" x2="427.83" y2="709.5" stroke="#a2a2a2" stroke-width="1.05"/>
<line x1="450.79" y1="704.5" x2="450.79" y2="709.5" stroke="#a2a2a2" stroke-width="1.05"/>
<line x1="473.75" y1="704.5" x2="473.75" y2="709.5" stroke="#a2a2a2" stroke-width="1.05"/>
<line x1="496.71" y1="704.5" x2="496.71" y2="709.5" stroke="#a2a2a2" stroke-width="1.05"/>
<line x1="519.67" y1="704.5" x2="519.67" y2="709.5" stroke="#a2a2a2" stroke-width="1.05"/>
<line x1="542.62" y1="704.5" x2="542.62" y2="709.5" stroke="#a2a2a2" stroke-width="1.05"/>
<line x1="565.58" y1="704.5" x2="565.58" y2="709.5" stroke="#a2a2a2" stroke-width="1.05"/>
<line x1="588.54" y1="704.5" x2="588.54" y2="709.5" stroke="#a2a2a2" stroke-width="1.05"/>
<text x="59.5" y="573" font-size="12.1" fill="#161616">Profits and losses by hours</text>
<text x="49.2" y="580.8" font-size="9.3" text-anchor="end" fill="#1e1e1e">1070000</text>
<text x="49.2" y="596.61" font-size="9.3" text-anchor="end" fill="#1e1e1e">936250</text>
<text x="49.2" y="612.42" font-size="9.3" text-anchor="end" fill="#1e1e1e">802500</text>
<text x="49.2" y="628.24" font-size="9.3" text-anchor="end" fill="#1e1e1e">668750</text>
<text x="49.2" y="644.05" font-size="9.3" text-anchor="end" fill="#1e1e1e">535000</text>
<text x="49.2" y="659.86" font-size="9.3" text-anchor="end" fill="#1e1e1e">401250</text>
<text x="49.2" y="675.67" font-size="9.3" text-anchor="end" fill="#1e1e1e">267500</text>
<text x="49.2" y="691.49" font-size="9.3" text-anchor="end" fill="#1e1e1e">133750</text>
<text x="49.2" y="707.3" font-size="9.3" text-anchor="end" fill="#1e1e1e">0</text>
<text x="62.4" y="719" font-size="9.3" fill="#1e1e1e">0</text>
<text x="85.36" y="719" font-size="9.3" fill="#1e1e1e">1</text>
<text x="108.32" y="719" font-size="9.3" fill="#1e1e1e">2</text>
<text x="131.28" y="719" font-size="9.3" fill="#1e1e1e">3</text>
<text x="154.23" y="719" font-size="9.3" fill="#1e1e1e">4</text>
<text x="177.19" y="719" font-size="9.3" fill="#1e1e1e">5</text>
<text x="200.15" y="719" font-size="9.3" fill="#1e1e1e">6</text>
<text x="223.11" y="719" font-size="9.3" fill="#1e1e1e">7</text>
<text x="246.07" y="719" font-size="9.3" fill="#1e1e1e">8</text>
<text x="269.02" y="719" font-size="9.3" fill="#1e1e1e">9</text>
<text x="291.98" y="719" font-size="9.3" fill="#1e1e1e">10</text>
<text x="314.94" y="719" font-size="9.3" fill="#1e1e1e">11</text>
<text x="337.9" y="719" font-size="9.3" fill="#1e1e1e">12</text>
<text x="360.86" y="719" font-size="9.3" fill="#1e1e1e">13</text>
<text x="383.82" y="719" font-size="9.3" fill="#1e1e1e">14</text>
<text x="406.77" y="719" font-size="9.3" fill="#1e1e1e">15</text>
<text x="429.73" y="719" font-size="9.3" fill="#1e1e1e">16</text>
<text x="452.69" y="719" font-size="9.3" fill="#1e1e1e">17</text>
<text x="475.65" y="719" font-size="9.3" fill="#1e1e1e">18</text>
<text x="498.61" y="719" font-size="9.3" fill="#1e1e1e">19</text>
<text x="521.57" y="719" font-size="9.3" fill="#1e1e1e">20</text>
<text x="544.52" y="719" font-size="9.3" fill="#1e1e1e">21</text>
<text x="567.48" y="719" font-size="9.3" fill="#1e1e1e">22</text>
<text x="590.44" y="719" font-size="9.3" fill="#1e1e1e">23</text>
<rect x="62.1" y="700.84" width="8.5" height="3.66" fill="url(#bl1)" stroke="#7d95dc" stroke-width="0.9" stroke-opacity="0.75"/>
<rect x="70.8" y="704.2" width="9.2" height="0.8" fill="#e0502e" fill-opacity="0.5"/>
<rect x="85.06" y="687.77" width="8.5" height="16.73" fill="url(#bl1)" stroke="#7d95dc" stroke-width="0.9" stroke-opacity="0.75"/>
<rect x="93.76" y="704.2" width="9.2" height="0.8" fill="#e0502e" fill-opacity="0.45"/>
<rect x="108.02" y="695.8" width="8.5" height="8.7" fill="url(#bl1)" stroke="#7d95dc" stroke-width="0.9" stroke-opacity="0.75"/>
<rect x="116.72" y="704.2" width="9.2" height="0.8" fill="#e0502e" fill-opacity="0.4"/>
<rect x="130.97" y="670.69" width="8.5" height="33.81" fill="url(#bl1)" stroke="#7d95dc" stroke-width="0.9" stroke-opacity="0.75"/>
<rect x="153.93" y="679.79" width="8.5" height="24.71" fill="url(#bl1)" stroke="#7d95dc" stroke-width="0.9" stroke-opacity="0.75"/>
<rect x="176.89" y="687.12" width="8.5" height="17.38" fill="url(#bl1)" stroke="#7d95dc" stroke-width="0.9" stroke-opacity="0.75"/>
<rect x="199.85" y="697.81" width="8.5" height="6.69" fill="url(#bl1)" stroke="#7d95dc" stroke-width="0.9" stroke-opacity="0.75"/>
<rect x="222.81" y="679.79" width="8.5" height="24.71" fill="url(#bl1)" stroke="#7d95dc" stroke-width="0.9" stroke-opacity="0.75"/>
<rect x="245.77" y="692.8" width="8.5" height="11.7" fill="url(#bl1)" stroke="#7d95dc" stroke-width="0.9" stroke-opacity="0.75"/>
<rect x="268.73" y="598.1" width="8.5" height="106.4" fill="url(#bl1)" stroke="#7d95dc" stroke-width="0.9" stroke-opacity="0.75"/>
<rect x="291.68" y="604.48" width="8.5" height="100.02" fill="url(#bl1)" stroke="#7d95dc" stroke-width="0.9" stroke-opacity="0.75"/>
<rect x="314.64" y="615.48" width="8.5" height="89.02" fill="url(#bl1)" stroke="#7d95dc" stroke-width="0.9" stroke-opacity="0.75"/>
<rect x="323.34" y="703" width="9.2" height="2" fill="#e0502e" fill-opacity="0.95"/>
<rect x="337.6" y="639.24" width="8.5" height="65.26" fill="url(#bl1)" stroke="#7d95dc" stroke-width="0.9" stroke-opacity="0.75"/>
<rect x="360.56" y="658.98" width="8.5" height="45.52" fill="url(#bl1)" stroke="#7d95dc" stroke-width="0.9" stroke-opacity="0.75"/>
<rect x="383.52" y="663" width="8.5" height="41.5" fill="url(#bl1)" stroke="#7d95dc" stroke-width="0.9" stroke-opacity="0.75"/>
<rect x="406.48" y="578" width="8.5" height="126.5" fill="url(#bl1)" stroke="#7d95dc" stroke-width="0.9" stroke-opacity="0.75"/>
<rect x="429.43" y="608.74" width="8.5" height="95.76" fill="url(#bl1)" stroke="#7d95dc" stroke-width="0.9" stroke-opacity="0.75"/>
<rect x="452.39" y="583.32" width="8.5" height="121.18" fill="url(#bl1)" stroke="#7d95dc" stroke-width="0.9" stroke-opacity="0.75"/>
<rect x="461.09" y="704.2" width="9.2" height="0.8" fill="#e0502e" fill-opacity="0.45"/>
<rect x="475.35" y="651.3" width="8.5" height="53.2" fill="url(#bl1)" stroke="#7d95dc" stroke-width="0.9" stroke-opacity="0.75"/>
<rect x="498.31" y="673.76" width="8.5" height="30.74" fill="url(#bl1)" stroke="#7d95dc" stroke-width="0.9" stroke-opacity="0.75"/>
<rect x="521.27" y="673.05" width="8.5" height="31.45" fill="url(#bl1)" stroke="#7d95dc" stroke-width="0.9" stroke-opacity="0.75"/>
<rect x="544.23" y="654.61" width="8.5" height="49.89" fill="url(#bl1)" stroke="#7d95dc" stroke-width="0.9" stroke-opacity="0.75"/>
<rect x="552.92" y="704.2" width="9.2" height="0.8" fill="#e0502e" fill-opacity="0.5"/>
<rect x="567.18" y="676.72" width="8.5" height="27.78" fill="url(#bl1)" stroke="#7d95dc" stroke-width="0.9" stroke-opacity="0.75"/>
<rect x="575.88" y="704.2" width="9.2" height="0.8" fill="#e0502e" fill-opacity="0.45"/>
<rect x="590.14" y="690.79" width="8.5" height="13.71" fill="url(#bl1)" stroke="#7d95dc" stroke-width="0.9" stroke-opacity="0.75"/>
<line x1="690" y1="578" x2="1232.7" y2="578" stroke="#aaaaaa" stroke-width="1.05"/>
<line x1="690" y1="593.81" x2="1232.7" y2="593.81" stroke="#aaaaaa" stroke-width="1.05"/>
<line x1="690" y1="609.62" x2="1232.7" y2="609.62" stroke="#aaaaaa" stroke-width="1.05"/>
<line x1="690" y1="625.44" x2="1232.7" y2="625.44" stroke="#aaaaaa" stroke-width="1.05"/>
<line x1="690" y1="641.25" x2="1232.7" y2="641.25" stroke="#aaaaaa" stroke-width="1.05"/>
<line x1="690" y1="657.06" x2="1232.7" y2="657.06" stroke="#aaaaaa" stroke-width="1.05"/>
<line x1="690" y1="672.88" x2="1232.7" y2="672.88" stroke="#aaaaaa" stroke-width="1.05"/>
<line x1="690" y1="688.69" x2="1232.7" y2="688.69" stroke="#aaaaaa" stroke-width="1.05"/>
<line x1="690" y1="704.5" x2="1232.7" y2="704.5" stroke="#aaaaaa" stroke-width="1.05"/>
<line x1="695" y1="578" x2="695" y2="709.5" stroke="#a2a2a2" stroke-width="1.05"/>
<line x1="771.81" y1="704.5" x2="771.81" y2="709.5" stroke="#a2a2a2" stroke-width="1.05"/>
<line x1="848.63" y1="704.5" x2="848.63" y2="709.5" stroke="#a2a2a2" stroke-width="1.05"/>
<line x1="925.44" y1="704.5" x2="925.44" y2="709.5" stroke="#a2a2a2" stroke-width="1.05"/>
<line x1="1002.26" y1="704.5" x2="1002.26" y2="709.5" stroke="#a2a2a2" stroke-width="1.05"/>
<line x1="1079.07" y1="704.5" x2="1079.07" y2="709.5" stroke="#a2a2a2" stroke-width="1.05"/>
<line x1="1155.89" y1="704.5" x2="1155.89" y2="709.5" stroke="#a2a2a2" stroke-width="1.05"/>
<text x="694" y="573" font-size="12.1" fill="#161616">Profits and losses by weekdays</text>
<text x="683.7" y="580.8" font-size="9.3" text-anchor="end" fill="#1e1e1e">2100000</text>
<text x="683.7" y="596.61" font-size="9.3" text-anchor="end" fill="#1e1e1e">1837500</text>
<text x="683.7" y="612.42" font-size="9.3" text-anchor="end" fill="#1e1e1e">1575000</text>
<text x="683.7" y="628.24" font-size="9.3" text-anchor="end" fill="#1e1e1e">1312500</text>
<text x="683.7" y="644.05" font-size="9.3" text-anchor="end" fill="#1e1e1e">1050000</text>
<text x="683.7" y="659.86" font-size="9.3" text-anchor="end" fill="#1e1e1e">787500</text>
<text x="683.7" y="675.67" font-size="9.3" text-anchor="end" fill="#1e1e1e">525000</text>
<text x="683.7" y="691.49" font-size="9.3" text-anchor="end" fill="#1e1e1e">262500</text>
<text x="683.7" y="707.3" font-size="9.3" text-anchor="end" fill="#1e1e1e">0</text>
<text x="715.6" y="719" font-size="9.3" fill="#1e1e1e">Sun</text>
<text x="792.41" y="719" font-size="9.3" fill="#1e1e1e">Mon</text>
<text x="869.23" y="719" font-size="9.3" fill="#1e1e1e">Tue</text>
<text x="946.04" y="719" font-size="9.3" fill="#1e1e1e">Wed</text>
<text x="1022.86" y="719" font-size="9.3" fill="#1e1e1e">Thu</text>
<text x="1099.67" y="719" font-size="9.3" fill="#1e1e1e">Fri</text>
<text x="1176.49" y="719" font-size="9.3" fill="#1e1e1e">Sat</text>
<rect x="791.02" y="594.08" width="19.2" height="110.42" fill="url(#bl1)" stroke="#7d95dc" stroke-width="0.9" stroke-opacity="0.75"/>
<rect x="810.62" y="703.2" width="19.2" height="1.8" fill="#e0502e" fill-opacity="0.9"/>
<rect x="867.83" y="590.41" width="19.2" height="114.09" fill="url(#bl1)" stroke="#7d95dc" stroke-width="0.9" stroke-opacity="0.75"/>
<rect x="887.44" y="704.2" width="19.2" height="0.8" fill="#e0502e" fill-opacity="0.5"/>
<rect x="944.65" y="592.4" width="19.2" height="112.1" fill="url(#bl1)" stroke="#7d95dc" stroke-width="0.9" stroke-opacity="0.75"/>
<rect x="964.25" y="704.2" width="19.2" height="0.8" fill="#e0502e" fill-opacity="0.5"/>
<rect x="1021.46" y="578" width="19.2" height="126.5" fill="url(#bl1)" stroke="#7d95dc" stroke-width="0.9" stroke-opacity="0.75"/>
<rect x="1041.06" y="704.2" width="19.2" height="0.8" fill="#e0502e" fill-opacity="0.45"/>
<rect x="1098.27" y="579.02" width="19.2" height="125.48" fill="url(#bl1)" stroke="#7d95dc" stroke-width="0.9" stroke-opacity="0.75"/>
<rect x="1117.88" y="704.2" width="19.2" height="0.8" fill="#e0502e" fill-opacity="0.5"/>
<line x1="1324.5" y1="578" x2="1880.9" y2="578" stroke="#aaaaaa" stroke-width="1.05"/>
<line x1="1324.5" y1="593.81" x2="1880.9" y2="593.81" stroke="#aaaaaa" stroke-width="1.05"/>
<line x1="1324.5" y1="609.62" x2="1880.9" y2="609.62" stroke="#aaaaaa" stroke-width="1.05"/>
<line x1="1324.5" y1="625.44" x2="1880.9" y2="625.44" stroke="#aaaaaa" stroke-width="1.05"/>
<line x1="1324.5" y1="641.25" x2="1880.9" y2="641.25" stroke="#aaaaaa" stroke-width="1.05"/>
<line x1="1324.5" y1="657.06" x2="1880.9" y2="657.06" stroke="#aaaaaa" stroke-width="1.05"/>
<line x1="1324.5" y1="672.88" x2="1880.9" y2="672.88" stroke="#aaaaaa" stroke-width="1.05"/>
<line x1="1324.5" y1="688.69" x2="1880.9" y2="688.69" stroke="#aaaaaa" stroke-width="1.05"/>
<line x1="1324.5" y1="704.5" x2="1880.9" y2="704.5" stroke="#aaaaaa" stroke-width="1.05"/>
<line x1="1329.5" y1="578" x2="1329.5" y2="709.5" stroke="#a2a2a2" stroke-width="1.05"/>
<line x1="1375.45" y1="704.5" x2="1375.45" y2="709.5" stroke="#a2a2a2" stroke-width="1.05"/>
<line x1="1421.4" y1="704.5" x2="1421.4" y2="709.5" stroke="#a2a2a2" stroke-width="1.05"/>
<line x1="1467.35" y1="704.5" x2="1467.35" y2="709.5" stroke="#a2a2a2" stroke-width="1.05"/>
<line x1="1513.3" y1="704.5" x2="1513.3" y2="709.5" stroke="#a2a2a2" stroke-width="1.05"/>
<line x1="1559.25" y1="704.5" x2="1559.25" y2="709.5" stroke="#a2a2a2" stroke-width="1.05"/>
<line x1="1605.2" y1="704.5" x2="1605.2" y2="709.5" stroke="#a2a2a2" stroke-width="1.05"/>
<line x1="1651.15" y1="704.5" x2="1651.15" y2="709.5" stroke="#a2a2a2" stroke-width="1.05"/>
<line x1="1697.1" y1="704.5" x2="1697.1" y2="709.5" stroke="#a2a2a2" stroke-width="1.05"/>
<line x1="1743.05" y1="704.5" x2="1743.05" y2="709.5" stroke="#a2a2a2" stroke-width="1.05"/>
<line x1="1789" y1="704.5" x2="1789" y2="709.5" stroke="#a2a2a2" stroke-width="1.05"/>
<line x1="1834.95" y1="704.5" x2="1834.95" y2="709.5" stroke="#a2a2a2" stroke-width="1.05"/>
<text x="1328.5" y="573" font-size="12.1" fill="#161616">Profits and losses by months</text>
<text x="1318.2" y="580.8" font-size="9.3" text-anchor="end" fill="#1e1e1e">1070000</text>
<text x="1318.2" y="596.61" font-size="9.3" text-anchor="end" fill="#1e1e1e">936250</text>
<text x="1318.2" y="612.42" font-size="9.3" text-anchor="end" fill="#1e1e1e">802500</text>
<text x="1318.2" y="628.24" font-size="9.3" text-anchor="end" fill="#1e1e1e">668750</text>
<text x="1318.2" y="644.05" font-size="9.3" text-anchor="end" fill="#1e1e1e">535000</text>
<text x="1318.2" y="659.86" font-size="9.3" text-anchor="end" fill="#1e1e1e">401250</text>
<text x="1318.2" y="675.67" font-size="9.3" text-anchor="end" fill="#1e1e1e">267500</text>
<text x="1318.2" y="691.49" font-size="9.3" text-anchor="end" fill="#1e1e1e">133750</text>
<text x="1318.2" y="707.3" font-size="9.3" text-anchor="end" fill="#1e1e1e">0</text>
<text x="1342.3" y="719" font-size="9.3" fill="#1e1e1e">Jan</text>
<text x="1388.25" y="719" font-size="9.3" fill="#1e1e1e">Feb</text>
<text x="1434.2" y="719" font-size="9.3" fill="#1e1e1e">Mar</text>
<text x="1480.15" y="719" font-size="9.3" fill="#1e1e1e">Apr</text>
<text x="1526.1" y="719" font-size="9.3" fill="#1e1e1e">May</text>
<text x="1572.05" y="719" font-size="9.3" fill="#1e1e1e">Jun</text>
<text x="1618" y="719" font-size="9.3" fill="#1e1e1e">Jul</text>
<text x="1663.95" y="719" font-size="9.3" fill="#1e1e1e">Aug</text>
<text x="1709.9" y="719" font-size="9.3" fill="#1e1e1e">Sep</text>
<text x="1755.85" y="719" font-size="9.3" fill="#1e1e1e">Oct</text>
<text x="1801.8" y="719" font-size="9.3" fill="#1e1e1e">Nov</text>
<text x="1847.75" y="719" font-size="9.3" fill="#1e1e1e">Dec</text>
<rect x="1340.53" y="632.26" width="11.49" height="72.24" fill="url(#bl1)" stroke="#7d95dc" stroke-width="0.9" stroke-opacity="0.75"/>
<rect x="1352.42" y="704.2" width="11.49" height="0.8" fill="#e0502e" fill-opacity="0.45"/>
<rect x="1386.48" y="645.98" width="11.49" height="58.52" fill="url(#bl1)" stroke="#7d95dc" stroke-width="0.9" stroke-opacity="0.75"/>
<rect x="1398.37" y="704.2" width="11.49" height="0.8" fill="#e0502e" fill-opacity="0.4"/>
<rect x="1432.43" y="609.8" width="11.49" height="94.7" fill="url(#bl1)" stroke="#7d95dc" stroke-width="0.9" stroke-opacity="0.75"/>
<rect x="1444.32" y="703" width="11.49" height="2" fill="#e0502e" fill-opacity="0.95"/>
<rect x="1478.38" y="618.2" width="11.49" height="86.3" fill="url(#bl1)" stroke="#7d95dc" stroke-width="0.9" stroke-opacity="0.75"/>
<rect x="1490.27" y="704.2" width="11.49" height="0.8" fill="#e0502e" fill-opacity="0.4"/>
<rect x="1524.33" y="616.19" width="11.49" height="88.31" fill="url(#bl1)" stroke="#7d95dc" stroke-width="0.9" stroke-opacity="0.75"/>
<rect x="1536.22" y="704.2" width="11.49" height="0.8" fill="#e0502e" fill-opacity="0.4"/>
<rect x="1570.28" y="609.8" width="11.49" height="94.7" fill="url(#bl1)" stroke="#7d95dc" stroke-width="0.9" stroke-opacity="0.75"/>
<rect x="1582.17" y="704.2" width="11.49" height="0.8" fill="#e0502e" fill-opacity="0.4"/>
<rect x="1616.23" y="585.09" width="11.49" height="119.41" fill="url(#bl1)" stroke="#7d95dc" stroke-width="0.9" stroke-opacity="0.75"/>
<rect x="1662.18" y="597.39" width="11.49" height="107.11" fill="url(#bl1)" stroke="#7d95dc" stroke-width="0.9" stroke-opacity="0.75"/>
<rect x="1708.13" y="580.36" width="11.49" height="124.14" fill="url(#bl1)" stroke="#7d95dc" stroke-width="0.9" stroke-opacity="0.75"/>
<rect x="1720.02" y="704.2" width="11.49" height="0.8" fill="#e0502e" fill-opacity="0.45"/>
<rect x="1754.08" y="602.12" width="11.49" height="102.38" fill="url(#bl1)" stroke="#7d95dc" stroke-width="0.9" stroke-opacity="0.75"/>
<rect x="1765.97" y="704.2" width="11.49" height="0.8" fill="#e0502e" fill-opacity="0.4"/>
<rect x="1800.03" y="578" width="11.49" height="126.5" fill="url(#bl1)" stroke="#7d95dc" stroke-width="0.9" stroke-opacity="0.75"/>
<rect x="1845.98" y="623.52" width="11.49" height="80.98" fill="url(#bl1)" stroke="#7d95dc" stroke-width="0.9" stroke-opacity="0.75"/>
</svg>
<div class="abs" style="left:1898px;top:5px;width:17px;height:755px;background:#f0f0f0"></div>
<div class="abs" style="left:1898px;top:22px;width:15px;height:371px;background:#cdcdcd"></div>
<svg class="abs" style="left:1899px;top:8px" width="14" height="12" viewBox="0 0 14 12"><path d="M3.2 8.2 L6.6 4.3 L10 8.2" stroke="#4a4a4a" stroke-width="2" fill="none"/></svg>
<svg class="abs" style="left:1899px;top:746px" width="14" height="12" viewBox="0 0 14 12"><path d="M3.3 4 L6.5 7.8 L9.7 4" stroke="#3c3c3c" stroke-width="1.9" fill="none"/></svg>
<div class="box" style="left:12px;top:43px;width:617px;height:39px"></div>
<div class="box" style="left:12px;top:135px;width:613px;height:42.5px"></div>
<div class="box" style="left:652px;top:79px;width:1248px;height:46px"></div>
<div class="box" style="left:648.5px;top:251px;width:612.0px;height:22.5px"></div>
<div class="box" style="left:569.2px;top:345.6px;width:1331.0px;height:23.899999999999977px"></div>
<div class="abs" style="left:17px;top:761px;width:1901px;height:22px;background:#f0f0f0"></div>
<div class="abs" style="left:17px;top:759.7px;width:1897px;height:1.4px;background:#111"></div>
<div class="tab" style="left:30px;transform-origin:0 50%;transform:scaleX(0.98)">Overview</div>
<div class="tab" style="left:99px;transform-origin:0 50%;transform:scaleX(0.96)">Settings</div>
<div class="tab" style="left:160.3px;transform-origin:0 50%;transform:scaleX(1)">Inputs</div>
<div class="tab" style="left:277.7px;transform-origin:0 50%;transform:scaleX(0.95)">Graph</div>
<div class="tab" style="left:329.3px;transform-origin:0 50%;transform:scaleX(0.99)">Agents</div>
<div class="tab" style="left:386px;transform-origin:0 50%;transform:scaleX(0.97)">Journal</div>
<div class="sep" style="left:89px"></div>
<div class="sep" style="left:151px"></div>
<div class="sep" style="left:320px"></div>
<div class="sep" style="left:376.5px"></div>
<div class="abs" style="left:203px;top:760px;width:65.4px;height:20.6px;box-sizing:border-box;background:#fff;border:2px solid #111;border-top:none"></div>
<div class="tab" style="left:213.5px;color:#000;transform-origin:0 50%;transform:scaleX(.955)">Backtest</div>
<div class="v" style="left:1530px;width:300px;top:763px;height:19px;line-height:19px;text-align:right;transform-origin:100% 50%;transform:scaleX(0.915)">00:08:14 / 00:08:14</div>
<div class="abs" style="left:1839px;top:763px;width:74px;height:17px;background:#8cc650;text-align:center;line-height:18px;font-size:12px;color:#000">Start</div>
<div class="abs" style="left:2px;top:783px;width:1916px;height:2px;background:#fbfbfb"></div>
<div class="abs" style="left:2px;top:785px;width:1916px;height:1px;background:#b9b9b9"></div>
<div class="abs" style="left:2px;top:786px;width:1916px;height:1px;background:#f4f4f4"></div>
</body></html>
